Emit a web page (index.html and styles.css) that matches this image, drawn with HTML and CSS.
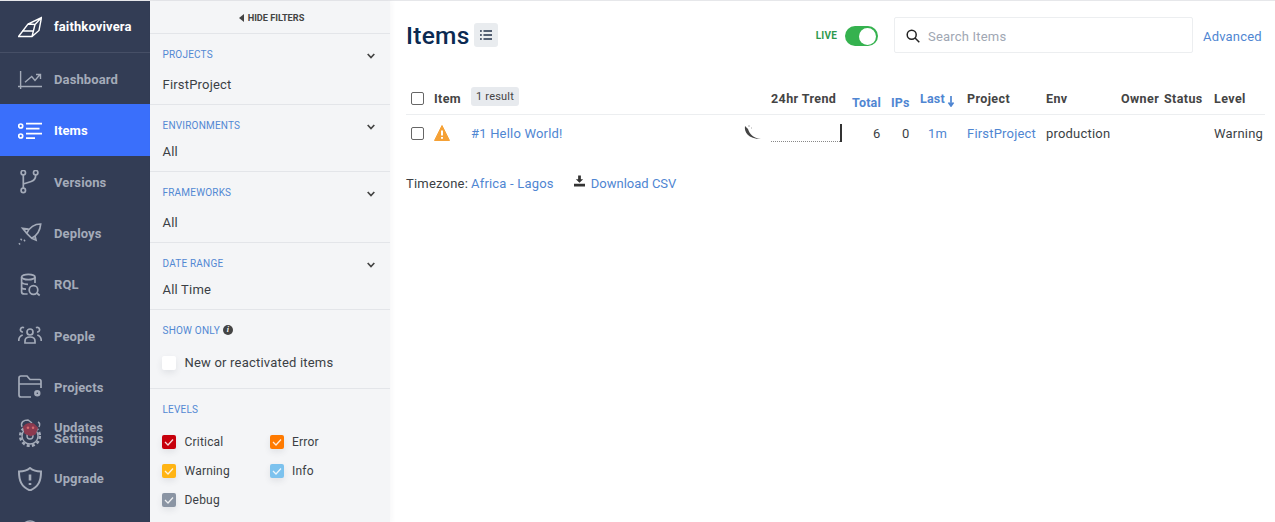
FILE: index.html
```html
<!DOCTYPE html>
<html lang="en">
<head>
<meta charset="utf-8">
<title>Items</title>
<link rel="stylesheet" href="styles.css">
</head>
<body>
<div class="app">
  <nav class="side">
    <div class="org">
      <svg class="ico" viewBox="0 0 24 24"><path d="M.5 21.500 10 9l13.500-6.500L21 15.500 14 21.500zM10 9l7 .5 6.500-7M17 9.500l-3 12M4 16h12"/></svg>
      <span>faithkovivera</span>
    </div>
    <a class="nav n-dash"><svg class="ico" viewBox="0 0 24 24"><path d="M2.600 4v18M0 19.500h24M7 15.200l6.700-5.700 3.300 4 5-6M18 7.500h4.500V12"/></svg><span>Dashboard</span></a>
    <a class="nav active"><svg class="ico thick" viewBox="0 0 24 24"><circle cx="2.700" cy="7" r="2"/><circle cx="2.700" cy="17" r="2"/><path d="M8 4.700h16M8 9.700h13.500M8 14.700h16M8 19.200h9"/></svg><span>Items</span></a>
    <a class="nav"><svg class="ico thick" viewBox="0 0 24 24"><circle cx="5.300" cy="2.700" r="2.200"/><circle cx="5.300" cy="20.400" r="2.200"/><circle cx="17.700" cy="2.700" r="2.200"/><path d="M5.300 5v13M17.700 5c0 4-1.500 5.500-4.500 6.500L5.300 14"/></svg><span>Versions</span></a>
    <a class="nav"><svg class="ico thick" viewBox="0 0 24 24"><path d="M22.700 3C17 3 12 5.500 8.700 12.300l5 5C20 14 22.200 9 22.700 3zM10.500 8.200 4.700 7.300l4 5M17 15l1 4-4.300-1.700"/><path class="dots" d="M7 19l-1 1M3.700 18l-1 1M2 22.300l-1 1"/></svg><span>Deploys</span></a>
    <a class="nav"><svg class="ico thick" viewBox="0 0 24 24"><ellipse cx="10.300" cy="4" rx="6.700" ry="2.700"/><path d="M3.600 4v15c0 1.500 1 2 3 2h3M17 4v6M3.600 9.500c1.500 1.500 4 1.800 6.400 1.800M3.600 15c1 .8 2.500 1.200 4.400 1.200"/><circle cx="15.500" cy="17" r="4.300"/><path d="m18.700 20 3 2.500"/></svg><span>RQL</span></a>
    <a class="nav"><svg class="ico thick" viewBox="0 0 24 24"><circle cx="12" cy="8" r="3"/><path d="M7 19v-2c0-2.500 2-4 5-4s5 1.500 5 4v2zM5 8a2.300 2.300 0 1 1 1-4.200M19 8a2.300 2.300 0 1 0-1-4.200M.7 17c0-3 1-5 4-6M23.300 17c0-3-1-5-4-6"/></svg><span>People</span></a>
    <a class="nav"><svg class="ico thick" viewBox="0 0 24 24"><path d="M13 22H3c-1.500 0-2-.8-2-2V3c0-1.200.6-2 2-2h6l3 3.500h9.500c1 0 1.500.7 1.500 2V13M1 9h12c4 0 7 0 10 0"/><circle cx="19.300" cy="18.300" r="2" class="cog"/></svg><span>Projects</span></a>
    <a class="nav double">
      <span class="stack">
        <svg class="ico gear" viewBox="0 0 24 30"><path d="M4 9C2 4 6 2 10 2l4 3M20 4c2 1 2 3 1 5"/><circle cx="12" cy="18" r="8"/><circle cx="12" cy="18" r="9.800" class="teeth"/><circle cx="12" cy="18" r="3"/></svg>
        <svg class="avatar" viewBox="0 0 20 16"><path d="M1 5C3 1 9-1 14 1l5 5-3 8-6 2-7-3z"/><circle cx="7" cy="6" r="1.500" class="av2"/><circle cx="13" cy="6" r="1.500" class="av2"/></svg>
      </span>
      <span class="dbl"><span>Updates</span><span>Settings</span></span>
    </a>
    <a class="nav"><svg class="ico shield" viewBox="0 0 24 24"><path d="M12 1c3 2.500 6 3.500 11 3.500 0 9-2 15-11 19C3 19.500 1 13.500 1 4.500 6 4.500 9 3.500 12 1z"/><path class="ex-s" d="M12 7.500v6M12 16v2"/></svg><span>Upgrade</span></a>
    <a class="nav"><svg class="ico" viewBox="0 0 24 24"><circle cx="12" cy="12" r="9"/></svg></a>
  </nav>

  <aside class="filters">
    <div class="hide"><i class="tri"></i>HIDE FILTERS</div>
    <section class="fs fs-p">
      <div class="fh"><span>PROJECTS</span><svg class="chev" viewBox="0 0 8 6"><path d="M.7 1 4 4.500 7.300 1"/></svg></div>
      <div class="fv">FirstProject</div>
    </section>
    <section class="fs fs-e">
      <div class="fh"><span>ENVIRONMENTS</span><svg class="chev" viewBox="0 0 8 6"><path d="M.7 1 4 4.500 7.300 1"/></svg></div>
      <div class="fv">All</div>
    </section>
    <section class="fs fs-p2">
      <div class="fh"><span>FRAMEWORKS</span><svg class="chev" viewBox="0 0 8 6"><path d="M.7 1 4 4.500 7.300 1"/></svg></div>
      <div class="fv">All</div>
    </section>
    <section class="fs fs-e">
      <div class="fh"><span>DATE RANGE</span><svg class="chev" viewBox="0 0 8 6"><path d="M.7 1 4 4.500 7.300 1"/></svg></div>
      <div class="fv">All Time</div>
    </section>
    <section class="fs fs-s">
      <div class="fh lab"><span>SHOW ONLY</span><b class="inf">i</b></div>
      <label class="opt"><i class="box"></i>New or reactivated items</label>
    </section>
    <section class="fs fs-l">
      <div class="fh lab"><span>LEVELS</span></div>
      <div class="levels">
        <div class="lv"><i class="box c-crit"><svg viewBox="0 0 14 14"><path d="M3 7l3 3 5-5.500"/></svg></i>Critical</div>
        <div class="lv"><i class="box c-err"><svg viewBox="0 0 14 14"><path d="M3 7l3 3 5-5.500"/></svg></i>Error</div>
        <div class="lv"><i class="box c-warn"><svg viewBox="0 0 14 14"><path d="M3 7l3 3 5-5.500"/></svg></i>Warning</div>
        <div class="lv"><i class="box c-info"><svg viewBox="0 0 14 14"><path d="M3 7l3 3 5-5.500"/></svg></i>Info</div>
        <div class="lv"><i class="box c-dbg"><svg viewBox="0 0 14 14"><path d="M3 7l3 3 5-5.500"/></svg></i>Debug</div>
      </div>
    </section>
  </aside>

  <main class="main">
    <header class="top">
      <h1>Items</h1>
      <span class="listbtn"><svg viewBox="0 0 12 10"><path d="M0 1h1.800M3.500 1H12M0 5h1.800M3.500 5H12M0 9h1.800M3.500 9H12"/></svg></span>
      <span class="live">LIVE</span>
      <span class="toggle"><i></i></span>
      <div class="search">
        <svg viewBox="0 0 14 14"><circle cx="5.700" cy="5.700" r="4.500"/><path d="m9 9 4.300 4.300"/></svg>
        <span>Search Items</span>
      </div>
      <a class="link adv">Advanced</a>
    </header>

    <div class="row head">
      <i class="cb"></i>
      <span class="th">Item</span>
      <span class="badge">1 result</span>
      <span class="th">24hr Trend</span>
      <span class="th lnk low">Total</span>
      <span class="th lnk low">IPs</span>
      <span class="th lnk lastc">Last<svg class="arrow" viewBox="0 0 8 11"><path d="M4 0v9M1.500 6.500 4 10l2.500-3.500"/></svg></span>
      <span class="th">Project</span>
      <span class="th">Env</span>
      <span class="th">Owner</span>
      <span class="th">Status</span>
      <span class="th">Level</span>
    </div>
    <div class="row body">
      <i class="cb"></i>
      <svg class="warn" viewBox="0 0 16 16"><path d="M8 .5 15.500 15.500H.5z" class="tri-w"/><path class="ex" d="M8 5.500v5M8 12v1.800"/></svg>
      <a class="link title">#1 Hello World!</a>
      <span class="trend">
        <svg class="fw" viewBox="0 0 18 15"><path d="M1 1C0 7 4 14 17 14 9 13 5.500 9 4 4z"/><path class="fw-top" d="M4 1h2M7 3h1"/></svg>
        <span class="spark"><i></i></span>
      </span>
      <span class="num">6</span>
      <span class="num">0</span>
      <a class="link mins">1m</a>
      <a class="link">FirstProject</a>
      <span>production</span>
      <span></span>
      <span></span>
      <span>Warning</span>
    </div>

    <div class="foot">
      <span>Timezone:</span>
      <a class="link tz">Africa - Lagos</a>
      <svg class="dl" viewBox="0 0 12 12"><path d="M4.500 0h3v4H10L6 8 2 4h2.500zM0 9h12v3H0z"/></svg>
      <a class="link csv">Download CSV</a>
    </div>
  </main>
</div>
</body>
</html>
```
FILE: styles.css
```css
* { box-sizing: border-box; }
html, body { margin: 0; height: 100%; overflow: hidden; }
body { font-family: Roboto, "Liberation Sans", sans-serif; font-size: 13px; color: #3b3f45; background: #fff; letter-spacing: .2px; }
.app { display: flex; height: 522px; border-top: 1px solid #e6e7ea; }
.side { width: 150px; flex: none; background: #333d55; color: #a4abb9; font-weight: 700; overflow: hidden; letter-spacing: .12px; }
.ico { width: 24px; height: 24px; flex: none; fill: none; stroke: currentColor; stroke-width: 1.400; }
.thick { stroke-width: 1.700; }
.shield { stroke-width: 2; }
.ex-s { stroke-width: 2.600; }
.dots { stroke-width: 1.800; }
.cog { fill: #333d55; stroke-width: 2.400; }
.org { height: 52px; display: flex; align-items: center; gap: 12px; padding: 0 18px; color: #fff; border-bottom: 1px solid #464f66; }
.nav { height: 51.300px; display: flex; align-items: center; gap: 12px; padding: 1px 18px 0; }
.n-dash { height: 51px; }
.nav.active { background: #3a6ffb; color: #fff; height: 52px; }
.double { height: 40px; }
.dbl { display: flex; flex-direction: column; line-height: 11px; }
.stack { position: relative; width: 24px; height: 30px; display: block; flex: none; }
.gear { height: 30px; display: block; }
.teeth { stroke-width: 2.600; stroke-dasharray: 3 2.200; }
.avatar { position: absolute; left: 4px; top: 4px; width: 17px; height: 15px; fill: #8c3a4f; }
.av2 { fill: #d46a70; }

.filters { width: 240px; flex: none; background: #f4f5f7; box-shadow: 2px 0 5px rgba(40,50,70,.04); position: relative; }
.hide { height: 33px; border-bottom: 1px solid #e3e5e9; display: flex; align-items: center; justify-content: center; padding: 1px 0 0 3px; font-size: 9.200px; font-weight: 700; color: #444; letter-spacing: 0; }
.tri { width: 0; height: 0; border: 4px solid transparent; border-right: 5px solid #444; border-left: 0; margin-right: 4px; }
.fs { border-bottom: 1px solid #e3e5e9; padding: 14px 13px 0 12.500px; }
.fs-p { height: 71px; }
.fs-e { height: 67px; }
.fs-p2 { height: 71px; }
.fs-s { height: 79px; }
.fs-l { border: 0; }
.fh { display: flex; justify-content: space-between; align-items: center; font-size: 10px; color: #5288d3; height: 12px; }
.lab { justify-content: flex-start; gap: 3px; }
.chev { width: 8px; height: 6px; fill: none; stroke: #444; stroke-width: 1.700; margin: 4px 2px 0 0; }
.fv { margin-top: 17px; font-size: 13px; color: #3b3f45; }
.fs-e .fv { margin-top: 13px; }
.inf { width: 10px; height: 10px; border-radius: 50%; background: #444; color: #fff; font: italic 700 8px/10px "Liberation Serif", serif; text-align: center; }
.box { width: 14px; height: 14px; margin-left: -.500px; border-radius: 2px; flex: none; display: block; background: #fff; box-shadow: 0 3px 6px rgba(60,70,90,.1); }
.box svg { display: block; fill: none; stroke: #fff; stroke-width: 1.300; opacity: .85; }
.opt { display: flex; align-items: center; gap: 8.500px; margin-top: 19px; font-size: 13px; }
.levels { display: grid; grid-template-columns: 107.500px 1fr; grid-auto-rows: 29px; margin-top: 19px; font-size: 12px; }
.lv { display: flex; align-items: center; gap: 8.500px; height: 15px; }
.c-crit { background: #c7000c; }
.c-err { background: #ff7a00; }
.c-warn { background: #ffb414; }
.c-info { background: #7cc2ee; }
.c-dbg { background: #8a94a3; }

.main { flex: 1; min-width: 0; padding: 0 10px 0 16px; }
.top { height: 84px; display: flex; align-items: flex-start; padding-top: 16px; }
h1 { margin: 1px 0 0; font-size: 24.500px; font-weight: 500; line-height: 36px; color: #0b2a52; letter-spacing: .3px; }
.listbtn { width: 24px; height: 24px; margin: 6px 0 0 4px; background: #e9ecef; border-radius: 3px; display: flex; align-items: center; justify-content: center; }
.listbtn svg { width: 12px; height: 10px; fill: none; stroke: #22304a; stroke-width: 1.600; }
.live { margin: 13px 0 0 318px; font-size: 10px; font-weight: 700; color: #2e9a4d; }
.toggle { width: 33px; height: 20px; margin: 9px 0 0 8px; border-radius: 10px; background: #35b24f; padding: 1.500px; display: flex; justify-content: flex-end; }
.toggle i { width: 17px; height: 17px; background: #fff; border-radius: 50%; }
.search { width: 299px; height: 36px; margin: 0 0 0 16px; border: 1px solid #eceef0; border-radius: 2px; display: flex; align-items: center; gap: 8px; padding: 2px 0 0 11px; color: #a0a7b3; }
.search svg { width: 14px; height: 14px; fill: none; stroke: #222; stroke-width: 1.500; }
.link { color: #4f86d2; }
.adv { margin: 12px 0 0 10px; }
.row { display: grid; grid-template-columns: 23px 37px 300px 81px 39px 29px 47px 79px 75px 43px 50px 1fr; margin-left: 5px; align-items: center; }
.head { height: 30px; border-bottom: 1px solid #eceef0; margin-left: 0; padding: 0 0 2px 5px; }
.th { font-weight: 700; font-size: 12.500px; color: #444; white-space: nowrap; letter-spacing: .4px; }
.lnk { color: #4f86d2; letter-spacing: .2px; }
.low { padding-top: 8px; }
.lastc { display: flex; align-items: flex-start; gap: 2px; }
.arrow { width: 8px; height: 11px; margin-top: 5px; fill: none; stroke: #4f86d2; stroke-width: 1.700; }
.cb { width: 13px; height: 13px; border: 1px solid #666; border-radius: 2px; background: #fff; display: block; }
.badge { font-size: 11px; background: #e7eaee; border-radius: 3px; padding: 3px 5px; justify-self: start; color: #444; margin-top: -5px; }
.body { height: 38px; padding-bottom: 2px; }
.warn { width: 16px; height: 16px; fill: #f5a136; }
.tri-w { stroke: #f5a136; stroke-width: 1; stroke-linejoin: round; }
.ex { stroke: #fff; stroke-width: 2; fill: none; }
.title { justify-self: start; }
.trend { position: relative; height: 36px; display: block; }
.fw { position: absolute; left: -27px; top: 10px; width: 18px; height: 15px; fill: #444; }
.fw-top { stroke: #aaa; stroke-width: 1; fill: none; }
.spark { position: absolute; left: 0; top: 9px; width: 71px; height: 18px; border-bottom: 1px dotted #888; }
.spark i { position: absolute; right: 0; top: 0; height: 18px; width: 2px; background: #333; }
.num { text-align: right; padding-right: 10.500px; }
.mins { padding-left: 8px; }
.foot { display: flex; align-items: center; height: 20px; margin-top: 20px; }
.foot > span { margin-right: 3px; }
.tz { margin-right: 20px; }
.dl { width: 11px; height: 12px; fill: #333; margin: -5px 6px 0 0; }
.csv { letter-spacing: 0; }
```
